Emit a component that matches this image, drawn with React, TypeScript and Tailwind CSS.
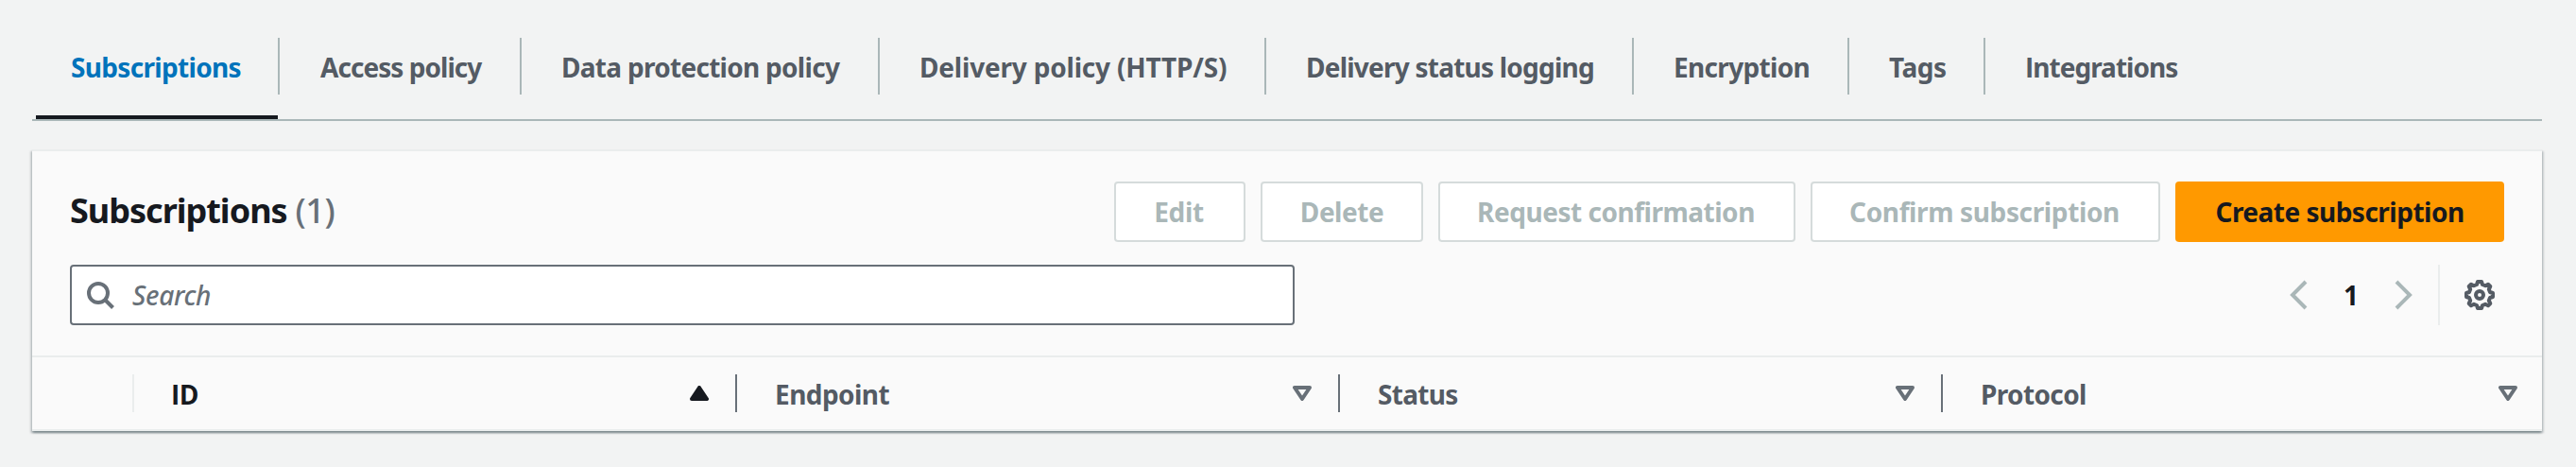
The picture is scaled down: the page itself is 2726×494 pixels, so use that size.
import React from "react";

type Tab = { label: React.ReactNode; width: string; spacing: string; active?: boolean };

const tabs: Tab[] = [
  { label: "Subscriptions", width: "w-[256px] pl-[37px]", spacing: "tracking-[-0.68px]", active: true },
  { label: "Access policy", width: "w-[254px] pl-[43px]", spacing: "tracking-[-0.95px]" },
  { label: "Data protection policy", width: "w-[377px] pl-[42px]", spacing: "tracking-[-0.71px]" },
  { label: "Delivery policy (HTTP/S)", width: "w-[407px] pl-[42px]", spacing: "tracking-[-0.19px]" },
  { label: "Delivery status logging", width: "w-[387px] pl-[42px]", spacing: "tracking-[-0.77px]" },
  { label: "Encryption", width: "w-[226px] pl-[42px]", spacing: "tracking-[-0.67px]" },
  { label: "Tags", width: "w-[142px] pl-[42px]", spacing: "tracking-[-0.46px]" },
  {
    label: (
      <>
        <span className="font-['Open_Sans',sans-serif]">I</span>ntegrations
      </>
    ),
    width: "w-[240px] pl-[42px]",
    spacing: "tracking-[-0.98px]",
  },
];

const actions = [
  { label: "Edit", style: "w-[139px] tracking-[-0.3px] pr-[2px]" },
  { label: "Delete", style: "w-[172px] tracking-[-0.48px]" },
  { label: "Request confirmation", style: "w-[378px] tracking-[-0.48px] pr-[2px]" },
  { label: "Confirm subscription", style: "w-[370px] tracking-[-0.37px] pr-[2px]" },
];

function SearchIcon() {
  return (
    <svg className="h-8 w-8" viewBox="0 0 32 32" fill="none" stroke="#687078" strokeWidth="4">
      <circle cx="14" cy="14" r="10" />
      <path d="M21 21l8.5 8.5" />
    </svg>
  );
}

function Chevron({ flip = false }: { flip?: boolean }) {
  return (
    <svg className={flip ? "h-8 w-8 -scale-x-100" : "h-8 w-8"} viewBox="0 0 32 32" fill="none" stroke="#aab7b8" strokeWidth="4">
      <path d="M24 2L10 16l14 14" />
    </svg>
  );
}

function GearIcon() {
  return (
    <svg className="h-8 w-8" viewBox="0 0 32 32" fill="none" stroke="#545b64" strokeWidth="4" strokeLinejoin="round">
      <path d="M14 2h4l1 3 3 1.200 3-1.500 2.300 2.300-1.500 3 1.200 3 3 1v4l-3 1-1.200 3 1.500 3-2.300 2.300-3-1.500-3 1.200-1 3h-4l-1-3-3-1.200-3 1.500-2.300-2.300 1.500-3-1.200-3-3-1v-4l3-1 1.200-3-1.500-3 2.300-2.300 3 1.500 3-1.200z" />
      <circle cx="16" cy="16" r="4" />
    </svg>
  );
}

function SortIcon({ ascending = false }: { ascending?: boolean }) {
  return (
    <svg className="h-4 w-5" viewBox="0 0 20 16" strokeWidth="4" strokeLinejoin="round">
      {ascending ? (
        <path d="M10 2l8 12H2z" fill="#16191f" stroke="#16191f" />
      ) : (
        <path d="M2 2h16l-8 12z" fill="none" stroke="#687078" />
      )}
    </svg>
  );
}

const columns = [
  { label: "ID", text: "pl-[39px] font-['Open_Sans',sans-serif] tracking-[-0.6px] text-[#16191f]", width: "w-[636px] pr-7", ascending: true },
  { label: "Endpoint", text: "pl-10 tracking-[-0.55px] text-[#545b64]", width: "w-[636px] pr-7" },
  { label: "Status", text: "pl-10 tracking-[-0.7px] text-[#545b64]", width: "w-[636px] pr-7" },
  { label: "Protocol", text: "pl-10 tracking-[-0.63px] text-[#545b64]", width: "w-[634px] pr-[26px]" },
];

export default function App() {
  return (
    <div className="h-[494px] w-[2726px] bg-[#f2f3f3] pl-[34px] pr-[36px] font-['Noto_Sans',sans-serif] text-[28px] leading-[40px] text-[#16191f]">
      <nav className="flex h-[128px] border-b-2 border-[#aab7b8] pl-1">
        {tabs.map((tab, i) => (
          <React.Fragment key={i}>
            {i > 0 && <span className="mt-10 h-[60px] w-[2px] shrink-0 bg-[#aab7b8]" />}
            <a
              className={
                "flex h-[126px] shrink-0 items-start whitespace-nowrap border-b-4 pt-[51px] font-bold " +
                (tab.active ? "border-[#16191f] text-[#0073bb] " : "border-transparent text-[#545b64] ") +
                tab.width + " " + tab.spacing
              }
            >
              <span>{tab.label}</span>
            </a>
          </React.Fragment>
        ))}
      </nav>

      <section className="mt-[30px] h-[298px] border-y-2 border-[#eaeded] bg-[#fafafa] shadow-[0_2px_2px_0_rgba(0,28,36,0.3),2px_2px_2px_0_rgba(0,28,36,0.15),-2px_2px_2px_0_rgba(0,28,36,0.15)]">
        <header className="flex h-[96px] items-end justify-between pl-10 pr-10">
          <h2 className="flex h-[64px] items-center pb-[2px] text-[36px] font-bold">
            <span className="tracking-[-1px]">Subscriptions</span>
            <span className="ml-[9px] font-medium tracking-[-0.5px] text-[#687078]">(1)</span>
          </h2>
          <div className="flex gap-4">
            {actions.map((a) => (
              <button
                key={a.label}
                className={"h-16 whitespace-nowrap rounded-[4px] border-2 border-[#d5dbdb] bg-white text-center font-bold text-[#aab7b8] " + a.style}
              >
                {a.label}
              </button>
            ))}
            <button className="h-16 w-[348px] whitespace-nowrap rounded-[4px] bg-[#ff9900] text-center font-bold tracking-[-0.51px]">
              Create subscription
            </button>
          </div>
        </header>

        <div className="mt-6 flex h-16 items-center justify-between pl-10 pr-10">
          <div className="flex h-16 w-[1296px] items-center rounded-[4px] border-2 border-[#687078] bg-white pl-[14px]">
            <SearchIcon />
            <span className="ml-[18px] font-medium italic tracking-[-0.3px] text-[#687078]">Search</span>
          </div>
          <div className="flex h-16 items-center">
            <Chevron />
            <span className="w-20 text-center font-bold">1</span>
            <Chevron flip />
            <span className="ml-5 mr-[26px] h-16 w-[2px] bg-[#eaeded]" />
            <span className="mr-[10px]">
              <GearIcon />
            </span>
          </div>
        </div>

        <div className="mt-8 flex h-[78px] items-center border-t-2 border-[#eaeded] pl-[106px]">
          {columns.map((c, i) => (
            <React.Fragment key={c.label}>
              <span className={i === 0 ? "h-10 w-[2px] shrink-0 bg-[#eaeded]" : "h-10 w-[2px] shrink-0 bg-[#687078]"} />
              <div className={"flex shrink-0 items-center justify-between " + c.width}>
                <span className={"pt-px font-bold " + c.text}>{c.label}</span>
                <SortIcon ascending={c.ascending} />
              </div>
            </React.Fragment>
          ))}
        </div>
      </section>
    </div>
  );
}
